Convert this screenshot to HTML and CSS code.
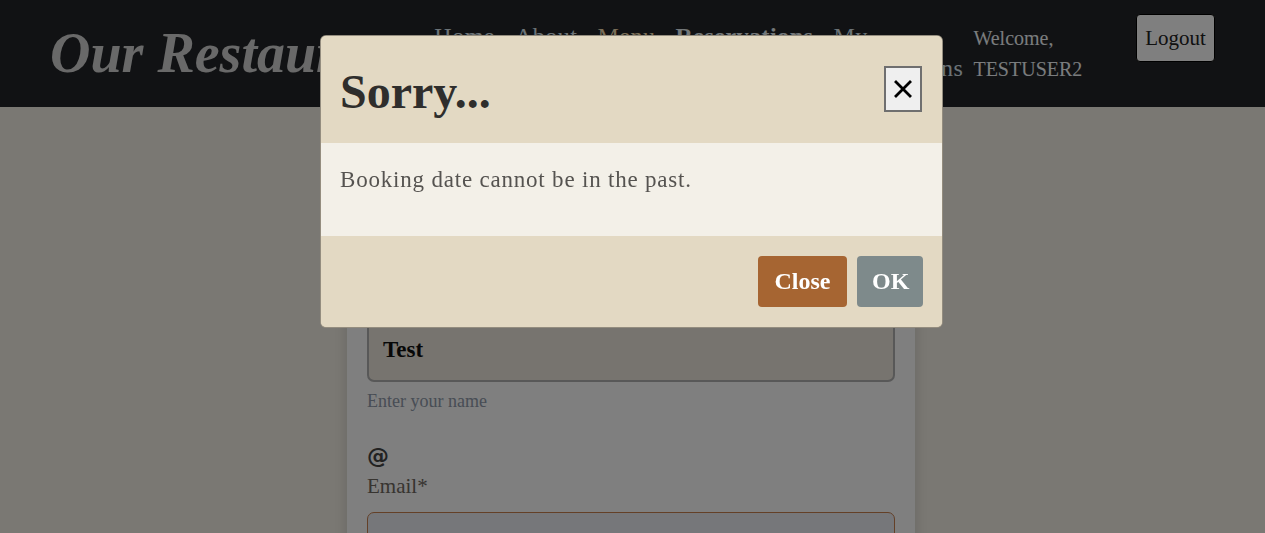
FILE: index.html
```html
<!DOCTYPE html>
<html lang="en">
<head>
<meta charset="utf-8">
<title>Our Restaurant - Reservations</title>
<link rel="stylesheet" href="styles.css">
</head>
<body>
<header class="navbar">
  <a class="brand" href="#">Our Restaurant</a>
  <nav class="nav">
    <a class="nav-link" href="#">Home</a>
    <a class="nav-link" href="#">About</a>
    <a class="nav-link menu" href="#">Menu</a>
    <a class="nav-link active" href="#">Reservations</a>
    <a class="nav-link narrow" href="#">My Reservations</a>
  </nav>
  <div class="welcome">Welcome,<br>TESTUSER2</div>
  <button class="logout">Logout</button>
</header>

<main class="page">
  <section class="card">
    <h2 class="card-title">Book a Table</h2>
    <div class="field">
      <div class="field-icon">&#128100;</div>
      <label class="label">Name*</label>
      <div class="input filled">Test</div>
      <div class="help">Enter your name</div>
    </div>
    <div class="field">
      <div class="field-icon at">@</div>
      <label class="label">Email*</label>
      <div class="input email">test@test.com</div>
    </div>
  </section>
</main>

<div class="backdrop"></div>

<div class="modal">
  <div class="modal-header">
    <h1 class="modal-title">Sorry...</h1>
    <button class="btn-x" aria-label="Close">
      <svg width="18" height="18" viewBox="0 0 18 18"><path d="M2 2 L16 16 M16 2 L2 16" stroke="#000" stroke-width="2.8" stroke-linecap="square"/></svg>
    </button>
  </div>
  <div class="modal-body">
    <p>Booking date cannot be in the past.</p>
  </div>
  <div class="modal-footer">
    <button class="btn btn-close">Close</button>
    <button class="btn btn-ok">OK</button>
  </div>
</div>
</body>
</html>
```
FILE: styles.css
```css
* { box-sizing: border-box; }

html, body {
  margin: 0;
  padding: 0;
  height: 100%;
}

body {
  font-family: "Liberation Serif", "Times New Roman", serif;
  background: #f4f0e6;
  color: #333;
  overflow: hidden;
}

.navbar {
  height: 107px;
  background: #232528;
  display: flex;
  align-items: flex-start;
  padding: 0 50px;
}

.brand {
  font-size: 56px;
  font-weight: bold;
  font-style: italic;
  color: #d2d2d2;
  text-decoration: none;
  margin-top: 21px;
  line-height: 64px;
  width: 385px;
  white-space: nowrap;
}

.nav {
  display: flex;
  gap: 20px;
  margin-top: 20px;
}

.nav-link {
  font-size: 24px;
  line-height: 32px;
  color: #d8e6ee;
  text-decoration: none;
  letter-spacing: 0.5px;
}

.nav-link.menu { color: #f2dcb0; }
.nav-link.active { font-weight: bold; color: #e6eef2; }
.nav-link.narrow { width: 130px; }

.welcome {
  font-size: 20px;
  line-height: 31px;
  color: #f4f8fc;
  margin-top: 23px;
  margin-left: 10px;
  width: 163px;
}

.logout {
  margin-top: 14px;
  height: 48px;
  width: 79px;
  font-family: "Liberation Serif", serif;
  font-size: 21px;
  color: #222;
  background: #ffffff;
  border: 1px solid #000;
  border-radius: 4px;
  padding: 0;
}

.page {
  display: flex;
  justify-content: center;
  padding-top: 40px;
  padding-right: 3px;
}

.card {
  width: 568px;
  background: #fefefe;
  padding: 49px 20px 24px;
  box-shadow: 0 0 12px rgba(0, 0, 0, 0.15);
}

.card-title {
  margin: 0 0 20px;
  font-size: 30px;
  text-align: center;
}

.field { margin-bottom: 32px; }

.field-icon {
  font-family: "DejaVu Sans", sans-serif;
  font-size: 22px;
  line-height: 24px;
  color: #444;
}

.field-icon.at { font-weight: bold; }

.label {
  display: block;
  font-size: 21px;
  line-height: 36px;
  color: #6e6860;
}

.input {
  margin-top: 8px;
  height: 64px;
  border: 2px solid #b0b0b0;
  border-radius: 7px;
  background: #eee8de;
  padding: 0 14px;
  display: flex;
  align-items: center;
  font-size: 23px;
}

.input.filled { font-weight: bold; color: #111; }

.input.email {
  border: 1.5px solid #c8804e;
  background: #eceef4;
  color: #888;
}

.help {
  margin-top: 9px;
  font-size: 18px;
  color: #909aaa;
}

.backdrop {
  position: fixed;
  inset: 0;
  background: rgba(0, 0, 0, 0.5);
}

.modal {
  position: fixed;
  top: 35px;
  left: 320px;
  width: 623px;
  border: 1px solid rgba(0, 0, 0, 0.35);
  border-radius: 6px;
  overflow: hidden;
  background: #e3d9c3;
}

.modal-header {
  height: 107px;
  display: flex;
  align-items: center;
  justify-content: space-between;
  padding: 0 20px 0 19px;
  background: #e3d9c3;
}

.modal-title {
  margin: 0;
  font-size: 48px;
  font-weight: bold;
  color: #2f2e2c;
  line-height: 1;
  padding-top: 4px;
}

.btn-x {
  width: 38px;
  height: 46px;
  margin-top: -2px;
  background: #efefef;
  border: 2px solid #6f6f6f;
  padding: 0;
  display: flex;
  align-items: center;
  justify-content: center;
}

.modal-body {
  height: 93px;
  background: #f3f0e8;
  padding: 22px 19px 0;
}

.modal-body p {
  margin: 0;
  font-size: 23px;
  line-height: 30px;
  letter-spacing: 0.8px;
  color: #555350;
}

.modal-footer {
  height: 91px;
  display: flex;
  justify-content: flex-end;
  align-items: center;
  gap: 10px;
  padding: 0 19px;
  background: #e3d9c3;
}

.btn {
  height: 51px;
  border: none;
  border-radius: 4px;
  color: #fff;
  font-family: "Liberation Serif", serif;
  font-weight: bold;
  font-size: 24px;
  padding: 0 15px;
}

.btn-close { background: #a66532; width: 89px; }
.btn-ok { background: #7e8a8b; width: 66px; }
```
